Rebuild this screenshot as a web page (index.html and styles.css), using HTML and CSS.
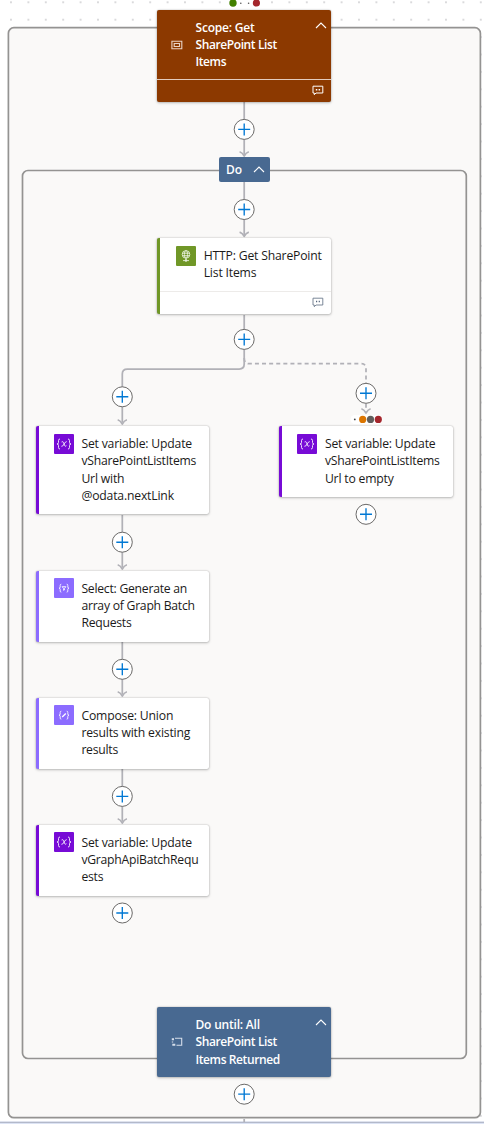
FILE: index.html
```html
<!DOCTYPE html>
<html lang="en">
<head>
<meta charset="utf-8">
<title>Workflow designer</title>
<link rel="stylesheet" href="styles.css">
</head>
<body>
<main class="canvas">
  <svg class="layer" width="484" height="1124" viewBox="0 0 484 1124">
    <defs>
      <pattern id="grid" x="2.3" y="-6.4" width="17.4" height="17.4" patternUnits="userSpaceOnUse">
        <circle cx="8.7" cy="8.7" r="0.75" fill="#a3a3a8"/>
      </pattern>
      <g id="plus">
        <circle r="10" fill="#fff" stroke="#6b6a69" stroke-width="1"/>
        <path d="M-6 0H6M0-6V6" stroke="#0078d4" stroke-width="1.35"/>
      </g>
      <path id="tip" d="M-4.6-4.2Q-1.8-3.3 0 0Q1.8-3.3 4.6-4.2" fill="none" stroke="#b1b1b7" stroke-width="1.7" stroke-linejoin="round"/>
    </defs>
    <rect width="484" height="1124" fill="url(#grid)"/>
    <rect y="1121.5" width="484" height="3" fill="#dce3f4"/>
    <path d="M0 1122.3H484" stroke="#a9aec0" stroke-width="1"/>
    <rect x="8.4" y="27.7" width="472" height="1090" rx="5.5" class="frame"/>
    <rect x="22.5" y="170.5" width="443.8" height="888" rx="5.5" class="frame"/>
    <g class="edge">
      <path d="M244.2 102V155M244.2 182V235M244.2 315V364Q244.2 369 239.2 369H127.3Q122.3 369 122.3 374V422"/>
      <path d="M122.3 515V567M122.3 642V694M122.3 769V821M244.2 1119V1122"/>
      <path d="M244.2 358Q244.2 363.7 249.2 363.7H361Q366 363.7 366 368.7V411" stroke-dasharray="4 3.1"/>
    </g>
    <use href="#tip" x="244.2" y="156"/>
    <use href="#tip" x="244.2" y="236.3"/>
    <use href="#tip" x="122.3" y="424"/>
    <use href="#tip" x="366" y="413"/>
    <use href="#tip" x="122.3" y="569"/>
    <use href="#tip" x="122.3" y="696"/>
    <use href="#tip" x="122.3" y="823"/>
    <use href="#plus" x="244.2" y="129.4"/>
    <use href="#plus" x="244.2" y="209.5"/>
    <use href="#plus" x="244.2" y="339.4"/>
    <use href="#plus" x="122.3" y="396.8"/>
    <use href="#plus" x="366" y="393.3"/>
    <use href="#plus" x="366" y="514.3"/>
    <use href="#plus" x="122.3" y="542.2"/>
    <use href="#plus" x="122.3" y="669.3"/>
    <use href="#plus" x="122.3" y="796.4"/>
    <use href="#plus" x="122.3" y="913"/>
    <use href="#plus" x="244.2" y="1094.2"/>
    <rect x="229" y="-1" width="31" height="9" rx="4" fill="#fff"/>
    <circle cx="233" cy="3" r="3.7" fill="#428000"/>
    <circle cx="240.8" cy="3.3" r=".8" fill="#555"/>
    <circle cx="248.6" cy="3.3" r=".8" fill="#555"/>
    <circle cx="256.4" cy="3" r="3.6" fill="#a4262c"/>
    <rect x="350.5" y="415" width="32" height="9" rx="4.5" fill="#fff"/>
    <circle cx="354.8" cy="419.4" r=".9" fill="#444"/>
    <circle cx="362.7" cy="419.4" r="3.6" fill="#db7500"/>
    <circle cx="370.5" cy="419.4" r="3.6" fill="#605e5c"/>
    <circle cx="378.3" cy="419.4" r="3.6" fill="#a4262c"/>
  </svg>

  <section class="card solid scope">
    <div class="head">
      <svg class="mark" width="12" height="10" viewBox="0 0 12 10"><path d="M.9 1.2H10.8V8.8H.9ZM3.2 3.5H8.5V6.5H3.2Z" fill="none" stroke="#e9d3c6" stroke-width="1.1"/></svg>
      <h2 class="title"><span class="snug">Scope: Get</span><span class="tight">SharePoint List</span><span class="tight">Items</span></h2>
      <svg class="chev" width="12" height="7" viewBox="0 0 12 7"><path d="M1 6L6 1L11 6" class="chevline"/></svg>
    </div>
    <footer class="foot"><svg width="12" height="11" viewBox="0 0 12 11"><path d="M1 1.2H10.8V8H4L2.3 9.7V8H1Z" fill="none" stroke="#fff" stroke-width="1"/><path d="M3.8 4.7H5.3M6.6 4.7H8.1" stroke="#fff" stroke-width="1.6"/></svg></footer>
  </section>

  <div class="pill"><span>Do</span><svg width="12" height="7" viewBox="0 0 12 7"><path d="M1 6L6 1L11 6" class="chevline"/></svg></div>

  <section class="card http">
    <div class="head">
      <svg class="icon green" width="20" height="20" viewBox="0 0 20 20"><g fill="none" stroke="#e6efda" stroke-width=".9"><circle cx="10" cy="8.4" r="3.8"/><ellipse cx="10" cy="8.4" rx="1.6" ry="3.8"/><path d="M6.3 7.2H13.7M6.3 9.7H13.7M10 12.2V14M7 14.6H13"/></g><circle cx="10" cy="14.5" r="1.2" fill="#e6efda"/></svg>
      <h2 class="title"><span>HTTP: Get SharePoint</span><span>List Items</span></h2>
    </div>
    <footer class="foot"><svg width="12" height="11" viewBox="0 0 12 11"><path d="M1 1.2H10.8V8H4L2.3 9.7V8H1Z" fill="none" stroke="#6d7b8d" stroke-width=".9"/><path d="M4 4.5H5.2M6.7 4.5H7.9" stroke="#55657a" stroke-width="1.4"/></svg></footer>
  </section>

  <section class="card variable next">
    <div class="head">
      <svg class="icon" width="20" height="20" viewBox="0 0 20 20"><g class="brace"><path d="M6 5Q4.5 5 4.5 6.5V8.5Q4.5 10 3 10Q4.5 10 4.5 11.5V13.5Q4.5 15 6 15M14 5Q15.5 5 15.5 6.5V8.5Q15.5 10 17 10Q15.5 10 15.5 11.5V13.5Q15.5 15 14 15"/><path d="M7.6 8Q9 7 9.6 8.7L10.5 11.3Q11 13 12.4 11.7M12.7 7.6Q11.6 7.4 10.3 9.8Q8.8 12.7 7.4 12.3"/></g></svg>
      <h2 class="title"><span>Set variable: Update</span><span class="tight">vSharePointListItems</span><span>Url with</span><span>@odata.nextLink</span></h2>
    </div>
  </section>

  <section class="card variable empty">
    <div class="head">
      <svg class="icon" width="20" height="20" viewBox="0 0 20 20"><g class="brace"><path d="M6 5Q4.5 5 4.5 6.5V8.5Q4.5 10 3 10Q4.5 10 4.5 11.5V13.5Q4.5 15 6 15M14 5Q15.5 5 15.5 6.5V8.5Q15.5 10 17 10Q15.5 10 15.5 11.5V13.5Q15.5 15 14 15"/><path d="M7.6 8Q9 7 9.6 8.7L10.5 11.3Q11 13 12.4 11.7M12.7 7.6Q11.6 7.4 10.3 9.8Q8.8 12.7 7.4 12.3"/></g></svg>
      <h2 class="title"><span>Set variable: Update</span><span class="tight">vSharePointListItems</span><span>Url to empty</span></h2>
    </div>
  </section>

  <section class="card data select">
    <div class="head">
      <svg class="icon" width="20" height="20" viewBox="0 0 20 20"><g class="brace"><path d="M7.3 6.2Q6.2 6.2 6.2 7.3V9Q6.2 10.2 5 10.2Q6.2 10.2 6.2 11.4V13.1Q6.2 14.2 7.3 14.2M12.7 6.2Q13.8 6.2 13.8 7.3V9Q13.8 10.2 15 10.2Q13.8 10.2 13.8 11.4V13.1Q13.8 14.2 12.7 14.2"/><path d="M8.1 8.7H11.9L10.4 10.5V12L9.6 12.4V10.5Z"/></g></svg>
      <h2 class="title"><span class="tight">Select: Generate an</span><span class="tight">array of Graph Batch</span><span class="tight">Requests</span></h2>
    </div>
  </section>

  <section class="card data compose">
    <div class="head">
      <svg class="icon" width="20" height="20" viewBox="0 0 20 20"><g class="brace"><path d="M7.3 6.2Q6.2 6.2 6.2 7.3V9Q6.2 10.2 5 10.2Q6.2 10.2 6.2 11.4V13.1Q6.2 14.2 7.3 14.2M12.7 6.2Q13.8 6.2 13.8 7.3V9Q13.8 10.2 15 10.2Q13.8 10.2 13.8 11.4V13.1Q13.8 14.2 12.7 14.2"/><path d="M8.2 12L11.8 8.5" stroke-width="1.3"/></g></svg>
      <h2 class="title"><span>Compose: Union</span><span>results with existing</span><span class="tight">results</span></h2>
    </div>
  </section>

  <section class="card variable batch">
    <div class="head">
      <svg class="icon" width="20" height="20" viewBox="0 0 20 20"><g class="brace"><path d="M6 5Q4.5 5 4.5 6.5V8.5Q4.5 10 3 10Q4.5 10 4.5 11.5V13.5Q4.5 15 6 15M14 5Q15.5 5 15.5 6.5V8.5Q15.5 10 17 10Q15.5 10 15.5 11.5V13.5Q15.5 15 14 15"/><path d="M7.6 8Q9 7 9.6 8.7L10.5 11.3Q11 13 12.4 11.7M12.7 7.6Q11.6 7.4 10.3 9.8Q8.8 12.7 7.4 12.3"/></g></svg>
      <h2 class="title"><span>Set variable: Update</span><span class="tight">vGraphApiBatchRequ</span><span class="tight">ests</span></h2>
    </div>
  </section>

  <section class="card solid until">
    <div class="head">
      <svg class="mark" width="12" height="10" viewBox="0 0 12 10"><path d="M4 1.3H10.7V8.3H5.5" fill="none" stroke="#d5deea" stroke-width="1.1"/><path d="M.8 1.3H3V3.2H.8ZM.8 4.4H2.2V5.6H.8ZM1.3 6.8H4.3V8.8H1.3Z" fill="#d5deea"/></svg>
      <h2 class="title"><span class="snug">Do until: All</span><span class="tight">SharePoint List</span><span class="tight">Items Returned</span></h2>
      <svg class="chev" width="12" height="7" viewBox="0 0 12 7"><path d="M1 6L6 1L11 6" class="chevline"/></svg>
    </div>
  </section>
</main>
</body>
</html>
```
FILE: styles.css
```css
body { margin: 0; background: #fff; }
.canvas {
  position: relative;
  width: 484px;
  height: 1124px;
  overflow: hidden;
  font-family: "Open Sans", "Noto Sans", sans-serif;
}
.layer { display: block; }
.frame { fill: #faf9f8; stroke: #949392; stroke-width: 1.7; }
.edge { fill: none; stroke: #b1b1b7; stroke-width: 1.75; }
.chevline { fill: none; stroke: #fff; stroke-width: 1.1; }

.card {
  position: absolute;
  box-sizing: border-box;
  width: 173.7px;
  display: flex;
  flex-direction: column;
  border-left: 3.5px solid;
  border-radius: 2px;
  background: #fff;
  color: #1b1a19;
  box-shadow: 0 1px 3px rgba(0, 0, 0, .22), 0 0 1.5px rgba(0, 0, 0, .3);
}
.head { flex: 1; display: flex; align-items: flex-start; padding: 9px 0 0 15.3px; }
.icon { flex: none; margin: -1.3px 7.6px 0 0; border-radius: 1px; }
.title {
  flex: 1;
  margin: 0;
  font-size: 12.2px;
  line-height: 17.45px;
  font-weight: 500;
  letter-spacing: -.18px;
  white-space: nowrap;
}
.title span { display: block; }
.title .tight { letter-spacing: -.25px; }
.foot {
  display: flex;
  justify-content: flex-end;
  align-items: center;
  height: 22.5px;
  padding-right: 7px;
  border-top: 1px solid #edebe9;
}
.brace { fill: none; stroke: #fff; stroke-width: .85; }

.solid { width: 174px; border-left: 0; color: #fff; }
.solid .title { font-weight: 600; font-size: 12px; }
.solid .snug { letter-spacing: -.2px; }
.solid .tight { letter-spacing: -.4px; }
.solid .head { padding-left: 13.5px; }
.mark { flex: none; align-self: center; margin: -8.5px 13px 0 0; }
.chev { flex: none; margin: 3.2px 4.5px 0 0; }

.scope { left: 157px; top: 9.5px; height: 92px; background: #8c3900; }
.scope .foot { height: 21.5px; border-color: #e3cbbd; }
.until { left: 157px; top: 1007px; height: 70px; background: #486991; }
.http { left: 157.3px; top: 238px; height: 76px; border-color: #709727; }
.http .head { padding-left: 15.8px; }
.green { background: #709727; }
.variable { border-color: #770bd6; }
.variable .icon { background: #770bd6; }
.data { border-color: #8c6cff; }
.data .icon { background: #8c6cff; }
.next { left: 35.5px; top: 426px; height: 88px; }
.empty { left: 279px; top: 426px; height: 70.5px; }
.select { left: 35.5px; top: 570.5px; height: 71px; }
.compose { left: 35.5px; top: 697.5px; height: 71px; }
.batch { left: 35.5px; top: 824.5px; height: 71px; }

.pill {
  position: absolute;
  left: 219px;
  top: 157.3px;
  width: 50.5px;
  height: 24.5px;
  box-sizing: border-box;
  padding: 0 5px 0 7px;
  display: flex;
  align-items: center;
  justify-content: space-between;
  border-radius: 2px;
  background: #486991;
  color: #fff;
  font-size: 12px;
  font-weight: 600;
}
```
